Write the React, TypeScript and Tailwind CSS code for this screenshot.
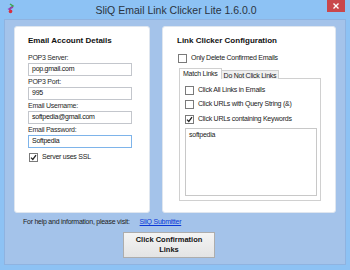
import React from "react";

const T = "text-[7px] tracking-[-0.25px]";

function Check({ checked, label }: { checked?: boolean; label: string }) {
  return (
    <div className="flex items-center h-[10px]">
      <div className="w-[9px] h-[9px] border border-[#7a7a7a] bg-white flex items-center justify-center shrink-0">
        {checked && (
          <svg width="7" height="7" viewBox="0 0 7 7">
            <path d="M1 3.6 L2.8 5.4 L6 1.2" stroke="#222" strokeWidth="1.3" fill="none" />
          </svg>
        )}
      </div>
      <span className={"ml-[4px] leading-[10px] text-[#1a1a1a] whitespace-nowrap " + T}>{label}</span>
    </div>
  );
}

function Field({ label, value, focused }: { label: string; value: string; focused?: boolean }) {
  return (
    <div className="flex flex-col mt-[1px]">
      <div className={"h-[10px] leading-[10px] text-[#2a2a2a] " + T}>{label}</div>
      <div
        className={
          "w-[104px] h-[13px] bg-white border flex items-center px-[3px] text-[#111] " +
          T +
          " " +
          (focused ? "border-[#7eb4ea]" : "border-[#c3c6cc]")
        }
      >
        {value}
      </div>
    </div>
  );
}

export default function App() {
  return (
    <div className="w-[350px] h-[270px] bg-[#8dc2f4] flex flex-col overflow-hidden font-['Liberation_Sans',Arial,sans-serif]">
      <div className="h-[19px] relative flex items-center justify-center shrink-0">
        <svg className="absolute left-[7px] top-[3px]" width="9" height="11" viewBox="0 0 9 11">
          <path d="M3 1 L6 3 L3 5" stroke="#3aa84a" strokeWidth="1.5" fill="none" />
          <path d="M6 4 L2 6 L5 8" stroke="#9a3ab0" strokeWidth="1.5" fill="none" />
          <circle cx="3.5" cy="8.5" r="1.8" fill="#d83040" />
        </svg>
        <span className="text-[10.5px] text-[#2a3340] leading-none mt-[1px] ml-[2px]">SliQ Email Link Clicker Lite 1.6.0.0</span>
        <div className="absolute right-[5px] top-0 w-[18px] h-[12px] bg-[#c9474c] flex items-center justify-center">
          <svg width="6" height="6" viewBox="0 0 6 6">
            <path d="M0.5 0.5 L5.5 5.5 M5.5 0.5 L0.5 5.5" stroke="white" strokeWidth="1.4" />
          </svg>
        </div>
      </div>
      <div className="mx-[4px] h-[246px] bg-[#a4c3ea] border border-[#8fb3e0] flex flex-col pl-[9px] pt-[6px]">
        <div className="flex gap-[12px] h-[187px]">
          <div className="w-[136px] h-full bg-white rounded-[3px] border border-[#dfe6ef] pl-[13px] pt-[9px] flex flex-col">
            <div className="text-[8px] font-bold leading-[10px] text-[#111] mb-[6px]">Email Account Details</div>
            <Field label="POP3 Server:" value="pop.gmail.com" />
            <Field label="POP3 Port:" value="995" />
            <Field label="Email Username:" value="softpedia@gmail.com" />
            <Field label="Email Password:" value="Softpedia" focused />
            <div className="mt-[4px] ml-[1px]">
              <Check checked label="Server uses SSL" />
            </div>
          </div>
          <div className="w-[174px] h-full bg-white rounded-[3px] border border-[#dfe6ef] pl-[14px] pt-[9px] flex flex-col">
            <div className="text-[8px] font-bold leading-[10px] text-[#111]">Link Clicker Configuration</div>
            <div className="mt-[7px] ml-[1px]">
              <Check label="Only Delete Confirmed Emails" />
            </div>
            <div className="mt-[5px] ml-[2px] flex items-end h-[11px] relative z-10">
              <div className={"h-[11px] px-[3px] border border-b-0 border-[#d0d0d0] bg-white leading-[10px] text-[#222] flex items-center " + T}>
                Match Links
              </div>
              <div className={"h-[9px] px-[2px] border border-l-0 border-b-0 border-[#d0d0d0] bg-[#f0f0f0] leading-[9px] text-[#222] flex items-center " + T}>
                Do Not Click Links
              </div>
            </div>
            <div className="ml-[2px] -mt-[1px] w-[142px] h-[123px] border border-[#d0d0d0] bg-white flex flex-col pl-[5px] pt-[6px]">
              <Check label="Click All Links in Emails" />
              <div className="mt-[4px]">
                <Check label="Click URLs with Query String (&)" />
              </div>
              <div className="mt-[5px]">
                <Check checked label="Click URLs containing Keywords" />
              </div>
              <div className={"mt-[4px] w-[132px] h-[68px] border border-[#c8c8c8] bg-white px-[3px] pt-[1px] leading-[10px] text-[#222] " + T}>
                softpedia
              </div>
            </div>
          </div>
        </div>
        <div className={"mt-[4px] h-[10px] flex items-center leading-[10px] text-[#222] ml-[9px] " + T}>
          <span>For help and information, please visit:</span>
          <span className="ml-[10px] text-[#0a38d8] underline">SliQ Submitter</span>
        </div>
        <div className="mt-[5px] ml-[109px] w-[92px] h-[26px] border border-[#adadad] bg-gradient-to-b from-[#f4f4f4] to-[#e4e4e4] flex flex-col items-center justify-center text-[7.5px] font-bold leading-[10px] text-[#111]">
          <span>Click Confirmation</span>
          <span>Links</span>
        </div>
      </div>
    </div>
  );
}
